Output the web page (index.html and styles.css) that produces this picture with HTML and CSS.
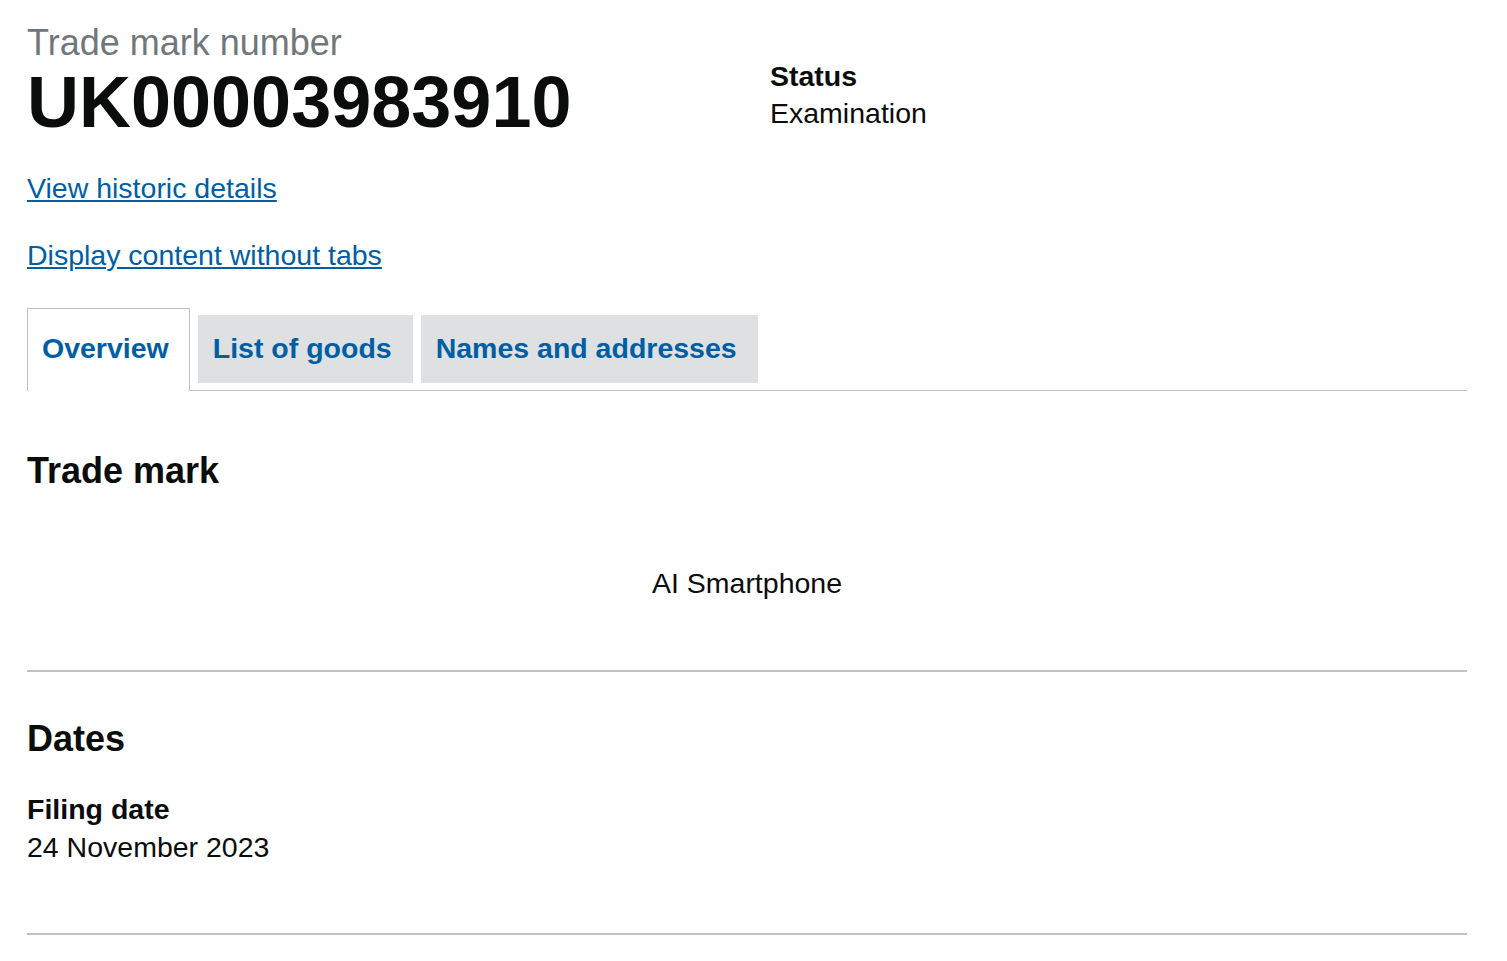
FILE: index.html
```html
<!DOCTYPE html>
<html lang="en">
<head>
<meta charset="utf-8">
<title>Trade mark UK00003983910</title>
<link rel="stylesheet" href="styles.css">
</head>
<body>
<main class="page">
  <div class="top-row">
    <div class="col">
      <span class="caption">Trade mark number</span>
      <h1 class="tm-number">UK00003983910</h1>
    </div>
    <div class="col status-col">
      <p class="label">Status</p>
      <p class="value">Examination</p>
    </div>
  </div>
  <p class="link-line first"><a href="#" class="link">View historic details</a></p>
  <p class="link-line second"><a href="#" class="link">Display content without tabs</a></p>

  <div class="tabs">
    <ul class="tab-list">
      <li class="tab selected"><a href="#" class="tab-link">Overview</a></li>
      <li class="tab"><a href="#" class="tab-link">List of goods</a></li>
      <li class="tab"><a href="#" class="tab-link">Names and addresses</a></li>
    </ul>
    <section class="panel">
      <h2 class="section-heading tm-heading">Trade mark</h2>
      <p class="mark-text">AI Smartphone</p>
      <hr class="rule">
      <h2 class="section-heading dates-heading">Dates</h2>
      <p class="label">Filing date</p>
      <p class="value">24 November 2023</p>
      <hr class="rule rule-bottom">
    </section>
  </div>
</main>
</body>
</html>
```

FILE: styles.css
```css
html, body {
  margin: 0;
  padding: 0;
  background: #ffffff;
}

body {
  font-family: "Liberation Sans", Arial, sans-serif;
  color: #0b0c0c;
}

.page {
  width: 1440px;
  padding: 22.5px 40px 0 27px;
}

.top-row {
  display: grid;
  grid-template-columns: 1fr 1fr;
}

.caption {
  display: block;
  font-size: 36px;
  line-height: 40px;
  color: #6f777b;
  margin-bottom: 2px;
}

.tm-number {
  margin: 0;
  font-size: 72px;
  line-height: 75px;
  font-weight: 700;
}

.status-col {
  padding-top: 35px;
  padding-left: 23px;
}

.label {
  margin: 0;
  font-size: 28.5px;
  line-height: 37.5px;
  font-weight: 700;
}

.value {
  margin: 0;
  font-size: 28.5px;
  line-height: 37.5px;
}

.link-line {
  margin: 30px 0 0 0;
  font-size: 28.5px;
  line-height: 36px;
}

.link-line.second {
  margin-top: 31px;
}

.link {
  color: #005ea5;
  text-decoration: underline;
}

.tabs {
  margin-top: 42.5px;
}

.tab-list {
  display: flex;
  align-items: flex-start;
  list-style: none;
  margin: 0;
  padding: 0;
  border-bottom: 1px solid #bfc1c3;
}

.tab {
  margin-right: 8px;
  padding: 15px 21px 15px 15px;
  background: #dee0e2;
  font-size: 28.5px;
  line-height: 37.5px;
  font-weight: 700;
}

.tab.selected {
  margin-top: -7.5px;
  margin-bottom: -1px;
  padding: 21px 20px 24px 14px;
  background: #ffffff;
  border: 1px solid #bfc1c3;
  border-bottom: 0;
}

.tab-link {
  color: #005ea5;
  text-decoration: none;
}

.panel {
  padding-top: 60px;
}

.section-heading {
  margin: 0;
  font-size: 36px;
  line-height: 40px;
  font-weight: 700;
}

.tm-heading {
  margin-bottom: 74px;
}

.mark-text {
  margin: 0 0 67px 0;
  text-align: center;
  font-size: 28.5px;
  line-height: 37.5px;
}

.rule {
  margin: 0;
  border: 0;
  border-top: 2px solid #bfc1c3;
  height: 0;
}

.dates-heading {
  margin-top: 47.5px;
  margin-bottom: 32px;
}

.rule-bottom {
  margin-top: 66.5px;
}
```
